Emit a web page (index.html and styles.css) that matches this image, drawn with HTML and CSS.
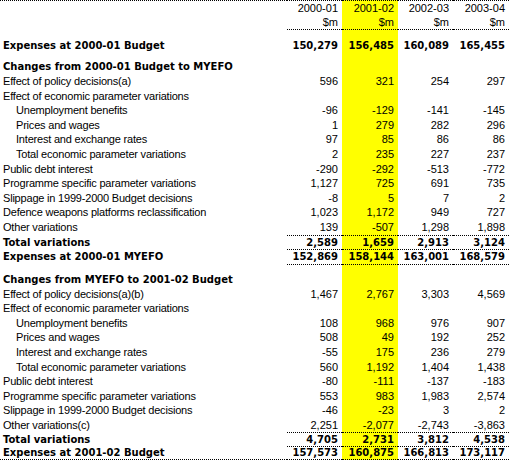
FILE: index.html
```html
<!DOCTYPE html>
<html lang="en">
<head>
  <meta charset="UTF-8" />
  <title>Expenses reconciliation</title>
  <link rel="stylesheet" href="styles.css">
</head>
<body>

<table class="recon">
  <colgroup>
    <col class="c-label"><col class="c-a"><col class="c-b"><col class="c-a"><col class="c-b">
  </colgroup>
  <tr class="head1">
    <td></td><td class="n">2000-01</td><td class="n hl">2001-02</td><td class="n">2002-03</td><td class="n">2003-04</td>
  </tr>
  <tr class="head2">
    <td></td><td class="n">$m</td><td class="n hl">$m</td><td class="n">$m</td><td class="n">$m</td>
  </tr>
  <tr class="gap8"><td></td><td></td><td class="hl"></td><td></td><td></td></tr>
  <tr class="row strong first">
    <td>Expenses at 2000-01 Budget</td><td class="n">150,279</td><td class="n hl">156,485</td><td class="n">160,089</td><td class="n">165,455</td>
  </tr>
  <tr class="gap7"><td></td><td></td><td class="hl"></td><td></td><td></td></tr>

  <!-- Budget to MYEFO -->
  <tr class="row strong sect">
    <td>Changes from 2000-01 Budget to MYEFO</td><td></td><td class="hl"></td><td></td><td></td>
  </tr>
  <tr class="row"><td>Effect of policy decisions(a)</td><td class="n">596</td><td class="n hl">321</td><td class="n">254</td><td class="n">297</td></tr>
  <tr class="row"><td>Effect of economic parameter variations</td><td></td><td class="hl"></td><td></td><td></td></tr>
  <tr class="row"><td class="ind">Unemployment benefits</td><td class="n">-96</td><td class="n hl">-129</td><td class="n">-141</td><td class="n">-145</td></tr>
  <tr class="row"><td class="ind">Prices and wages</td><td class="n">1</td><td class="n hl">279</td><td class="n">282</td><td class="n">296</td></tr>
  <tr class="row"><td class="ind">Interest and exchange rates</td><td class="n">97</td><td class="n hl">85</td><td class="n">86</td><td class="n">86</td></tr>
  <tr class="row"><td class="ind">Total economic parameter variations</td><td class="n">2</td><td class="n hl">235</td><td class="n">227</td><td class="n">237</td></tr>
  <tr class="row"><td>Public debt interest</td><td class="n">-290</td><td class="n hl">-292</td><td class="n">-513</td><td class="n">-772</td></tr>
  <tr class="row"><td>Programme specific parameter variations</td><td class="n">1,127</td><td class="n hl">725</td><td class="n">691</td><td class="n">735</td></tr>
  <tr class="row"><td>Slippage in 1999-2000 Budget decisions</td><td class="n">-8</td><td class="n hl">5</td><td class="n">7</td><td class="n">2</td></tr>
  <tr class="row"><td>Defence weapons platforms reclassification</td><td class="n">1,023</td><td class="n hl">1,172</td><td class="n">949</td><td class="n">727</td></tr>
  <tr class="row"><td>Other variations</td><td class="n">139</td><td class="n hl">-507</td><td class="n">1,298</td><td class="n">1,898</td></tr>
  <tr class="row strong total t1">
    <td>Total variations</td><td class="n">2,589</td><td class="n hl">1,659</td><td class="n">2,913</td><td class="n">3,124</td>
  </tr>
  <tr class="row strong result r1">
    <td>Expenses at 2000-01 MYEFO</td><td class="n">152,869</td><td class="n hl">158,144</td><td class="n">163,001</td><td class="n">168,579</td>
  </tr>
  <tr class="gap8"><td></td><td></td><td class="hl"></td><td></td><td></td></tr>

  <!-- MYEFO to Budget -->
  <tr class="row strong sect">
    <td>Changes from MYEFO to 2001-02 Budget</td><td></td><td class="hl"></td><td></td><td></td>
  </tr>
  <tr class="row"><td>Effect of policy decisions(a)(b)</td><td class="n">1,467</td><td class="n hl">2,767</td><td class="n">3,303</td><td class="n">4,569</td></tr>
  <tr class="row"><td>Effect of economic parameter variations</td><td></td><td class="hl"></td><td></td><td></td></tr>
  <tr class="row"><td class="ind">Unemployment benefits</td><td class="n">108</td><td class="n hl">968</td><td class="n">976</td><td class="n">907</td></tr>
  <tr class="row"><td class="ind">Prices and wages</td><td class="n">508</td><td class="n hl">49</td><td class="n">192</td><td class="n">252</td></tr>
  <tr class="row"><td class="ind">Interest and exchange rates</td><td class="n">-55</td><td class="n hl">175</td><td class="n">236</td><td class="n">279</td></tr>
  <tr class="row"><td class="ind">Total economic parameter variations</td><td class="n">560</td><td class="n hl">1,192</td><td class="n">1,404</td><td class="n">1,438</td></tr>
  <tr class="row"><td>Public debt interest</td><td class="n">-80</td><td class="n hl">-111</td><td class="n">-137</td><td class="n">-183</td></tr>
  <tr class="row"><td>Programme specific parameter variations</td><td class="n">553</td><td class="n hl">983</td><td class="n">1,983</td><td class="n">2,574</td></tr>
  <tr class="row"><td>Slippage in 1999-2000 Budget decisions</td><td class="n">-46</td><td class="n hl">-23</td><td class="n">3</td><td class="n">2</td></tr>
  <tr class="row"><td>Other variations(c)</td><td class="n">2,251</td><td class="n hl">-2,077</td><td class="n">-2,743</td><td class="n">-3,863</td></tr>
  <tr class="row strong total t2">
    <td>Total variations</td><td class="n">4,705</td><td class="n hl">2,731</td><td class="n">3,812</td><td class="n">4,538</td>
  </tr>
  <tr class="row strong result r2">
    <td>Expenses at 2001-02 Budget</td><td class="n">157,573</td><td class="n hl">160,875</td><td class="n">166,813</td><td class="n">173,117</td>
  </tr>
</table>

</body>
</html>
```

FILE: styles.css
```css
* {
  box-sizing: content-box;
}
html, body {
  background: #fff;
}
body {
  margin: 0;
  color: #000;
  font-family: "Liberation Sans", Arial, sans-serif;
  font-size: 11px;
}

.recon {
  width: 509px;
  border-collapse: separate;
  border-spacing: 0;
  table-layout: fixed;
}
.c-label { width: 287px; }
.c-a { width: 55px; }
.c-b { width: 56px; }

.recon td {
  padding: 0;
  white-space: nowrap;
  vertical-align: middle;
}
.recon td:first-child {
  padding-left: 3px;
  letter-spacing: -0.2px;
}
.recon td.ind {
  padding-left: 16px;
}
.recon td.n {
  text-align: right;
  padding-right: 4px;
}
.recon td.hl {
  background: #ffff00;
}

/* header */
.head1 td {
  border-top: 1px dotted #000;
  height: 15px;
  line-height: 15px;
}
.head2 td {
  height: 13px;
  line-height: 13px;
}
.head2 td.n {
  border-bottom: 1px dotted #000;
}

.gap8 td { height: 8px; }
.gap7 td { height: 7px; }

/* body rows */
.row td {
  line-height: 14.6px;
  height: 14.6px;
}
.strong td,
.strong td:first-child {
  font-family: "DejaVu Sans", Verdana, sans-serif;
  font-weight: bold;
  font-size: 10px;
  letter-spacing: 0;
}
.first td {
  height: 15px;
  line-height: 15px;
}
.sect td {
  height: 14px;
  line-height: 14px;
}

/* totals with dotted rules */
.total td.n {
  border-top: 1px dotted #000;
  border-bottom: 1px dotted #000;
}
.t1 td { height: 13px; line-height: 13px; }
.t2 td { height: 13px; line-height: 13px; }
.t1 td:first-child, .t2 td:first-child { height: 15px; }

.r1 td.n {
  border-bottom: 1px dotted #000;
}
.r1 td { height: 14px; line-height: 14px; }
.r1 td:first-child { height: 15px; }

.r2 td {
  border-bottom: 1px dotted #000;
  height: 12px;
  line-height: 12px;
}
```
